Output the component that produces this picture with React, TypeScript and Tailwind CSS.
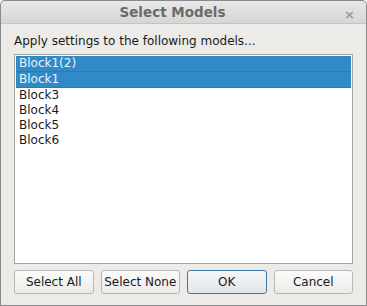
export default function App() {
  const models = ["Block1(2)", "Block1", "Block3", "Block4", "Block5", "Block6"];
  const selected = [0, 1];

  return (
    <div
      className="w-[367px] h-[306px] bg-[#8a8a8a] rounded-t-[5px] p-px flex flex-col text-[12px] text-[#1a1a1a]"
      style={{ fontFamily: '"DejaVu Sans", sans-serif' }}
    >
      {/* title bar */}
      <div className="h-[23px] shrink-0 rounded-t-[4px] bg-gradient-to-b from-[#e8e8e8] to-[#d6d6d6] border-b border-[#c4c4c4] relative flex items-center justify-center pr-[22px]">
        <span className="font-bold text-[13.5px] text-[#6a6a6a]">Select Models</span>
        <span className="absolute right-[11px] top-[4px] text-[13px] font-bold text-[#9a9a9a]">×</span>
      </div>

      <div className="flex-1 bg-[#edebe8] flex flex-col px-[13px] pt-[10px] pb-[11px]">
        <div className="leading-[15px] mb-[5px]">Apply settings to the following models...</div>

        <div className="flex-1 bg-white border border-[#a5a5a5] p-px">
          {models.map((m, i) => (
            <div
              key={m}
              className={
                selected.includes(i)
                  ? "h-[15px] leading-[15px] pl-[3px] bg-[#2f8ac7] text-[#eaf3fa] border-b border-[#2a7cb3] box-content"
                  : "h-[15px] leading-[15px] pl-[3px]"
              }
            >
              {m}
            </div>
          ))}
        </div>

        <div className="grid grid-cols-4 gap-[7px] mt-[6px]">
          {["Select All", "Select None", "OK", "Cancel"].map((b) => (
            <button
              key={b}
              className={
                b === "OK"
                  ? "h-[24px] rounded-[3px] border border-[#3f77a8] bg-gradient-to-b from-[#f4f6f8] to-[#e1e6eb] text-[#1a1a1a]"
                  : "h-[24px] rounded-[3px] border border-[#b9b7b3] bg-gradient-to-b from-[#fbfbfa] to-[#ecebe9] text-[#1a1a1a]"
              }
            >
              {b}
            </button>
          ))}
        </div>
      </div>
    </div>
  );
}
